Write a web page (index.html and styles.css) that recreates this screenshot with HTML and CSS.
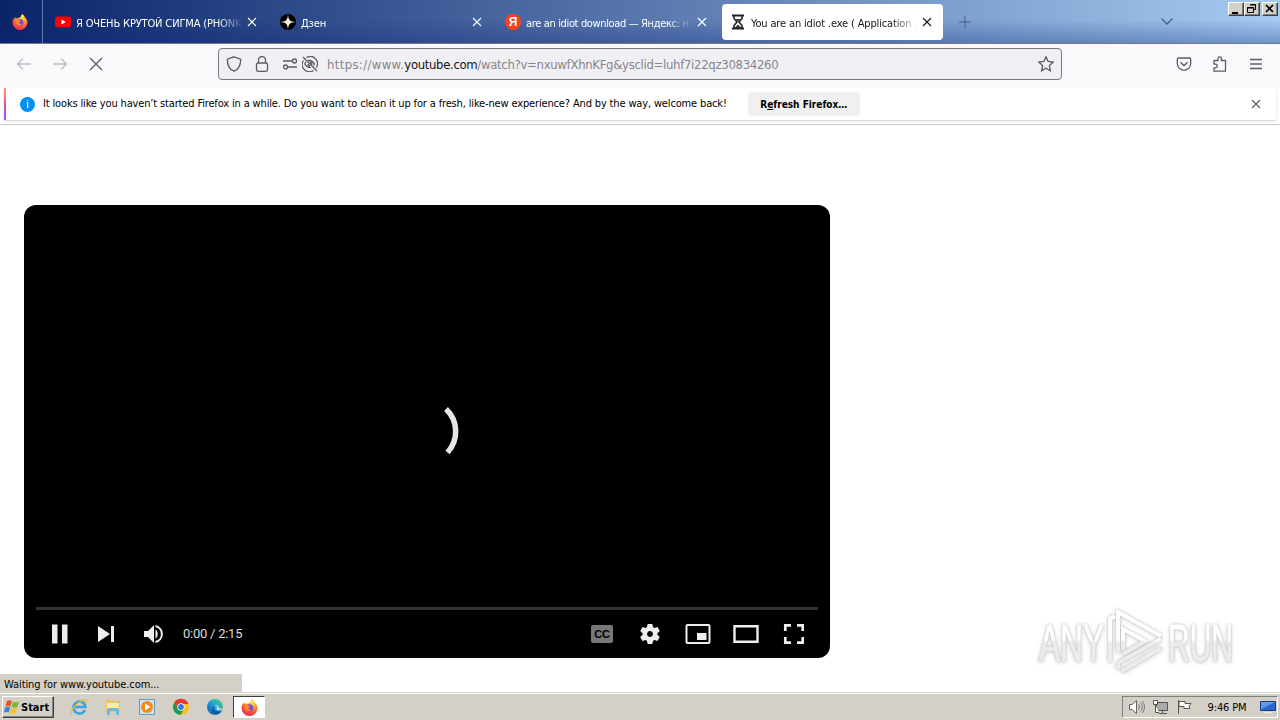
FILE: index.html
```html
<!DOCTYPE html>
<html lang="en">
  <head>
    <meta charset="UTF-8" />
    <title>You are an idiot .exe ( Application -</title>
    <link rel="stylesheet" href="styles.css">
  </head>
  <body>
    <svg class="defs" width="0" height="0">
      <defs>
        <radialGradient id="flame" cx=".65" cy=".15" r=".95">
          <stop offset="0" stop-color="#fff04a" />
          <stop offset=".4" stop-color="#ff9a26" />
          <stop offset=".75" stop-color="#ff4338" />
          <stop offset="1" stop-color="#e81d71" />
        </radialGradient>
        <linearGradient id="sea" x1="0" y1="1" x2="1" y2="0">
          <stop offset="0" stop-color="#0c59a4" />
          <stop offset=".5" stop-color="#1b9de2" />
          <stop offset="1" stop-color="#5bd65a" />
        </linearGradient>
        <linearGradient id="fade" gradientUnits="userSpaceOnUse" x1="0" y1="0" x2="0" y2="66">
          <stop offset=".48" stop-color="#fff" />
          <stop offset=".52" stop-color="#ececec" />
        </linearGradient>
        <symbol id="firefox" viewBox="0 0 16 16">
          <path fill="url(#flame)" d="M10 0c2 1 2.500 2.500 3 3.500 1.500 1 2.500 3 2.500 5a7.500 7.500 0 0 1-15 0c0-2 .7-3.500 1.700-5l.3 1.500c.5-.8.8-1.300 1.500-2l.2 1.600C6 3.800 7.500 4 8.500 3 9 2.500 9.200 1.200 10 0z" />
          <circle cx="8" cy="8.500" r="3.500" fill="#7d4ad6" />
          <path fill="#ff8a25" d="M3.500 5.500c1-.5 2.500-.2 3.500.8l2 .3c-.2.900-1.500 1.200-2 1.500-.3 1.500 1.500 2.400 3 1.700-1 2-3.800 2.200-5.200.5C3.700 9 3.300 7 3.500 5.500z" />
        </symbol>
        <symbol id="cross" viewBox="0 0 10 10">
          <path d="M1 1l8 8M9 1L1 9" fill="none" stroke="currentColor" stroke-width="1.100" />
        </symbol>
      </defs>
    </svg>

    <header class="tabbar">
      <div class="home-tab"><svg width="16" height="16"><use href="#firefox" /></svg></div>
      <div class="tab">
        <svg class="favicon" width="16" height="16" viewBox="0 0 16 16">
          <rect x="0" y="2.500" width="16" height="11" rx="3" fill="#f00" />
          <path d="M6.500 5.500v5L10.800 8z" fill="#fff" />
        </svg>
        <span class="tab-label">Я ОЧЕНЬ КРУТОЙ СИГМА (PHONK</span>
        <svg class="close" width="10" height="10"><use href="#cross" /></svg>
      </div>
      <div class="tab">
        <svg class="favicon" width="16" height="16" viewBox="0 0 16 16">
          <circle cx="8" cy="8" r="8" fill="#000" />
          <path d="M8 0c.2 6 2 7.800 8 8-6 .2-7.800 2-8 8-.2-6-2-7.800-8-8 6-.2 7.800-2 8-8z" fill="#fff4dc" />
        </svg>
        <span class="tab-label">Дзен</span>
        <svg class="close" width="10" height="10"><use href="#cross" /></svg>
      </div>
      <div class="tab">
        <span class="favicon yandex">Я</span>
        <span class="tab-label tight">are an idiot download — Яндекс: н</span>
        <svg class="close" width="10" height="10"><use href="#cross" /></svg>
      </div>
      <div class="tab active">
        <svg class="favicon" width="16" height="16" viewBox="0 0 16 16">
          <path d="M2 1.500h12M2 14.500h12" stroke="#222" stroke-width="2" />
          <path d="M4 2v2.500L7 8l-3 3.500V14h8v-2.500L9 8l3-3.500V2" fill="none" stroke="#222" stroke-width="1.600" />
          <path d="M5.500 5h5L8 7.500zM5 13.500l3-3 3 3z" fill="#333" />
        </svg>
        <span class="tab-label">You are an idiot .exe ( Application -</span>
        <svg class="close" width="10" height="10"><use href="#cross" /></svg>
      </div>
      <svg class="new-tab" width="12" height="12" viewBox="0 0 12 12"><path d="M6 0v12M0 6h12" stroke="#48607f" /></svg>
      <svg class="list-tabs" width="12" height="7" viewBox="0 0 12 7"><path d="M.5 .5L6 6 11.500 .5" fill="none" stroke="#3f618f" stroke-width="1.300" /></svg>
      <div class="window-buttons">
        <div class="wbtn"><svg width="14" height="12"><path d="M3 9h6v2H3z" /></svg></div>
        <div class="wbtn"><svg width="14" height="12"><path d="M5.500 1.500h5v5H9M5 2h6M2.500 4.500h6v5h-6zM2 5h7" fill="none" stroke="#000" /></svg></div>
        <div class="wbtn last"><svg width="14" height="12"><path d="M3 2l7 7M10 2L3 9" stroke="#000" stroke-width="1.700" /></svg></div>
      </div>
    </header>

    <nav class="toolbar">
      <svg class="nav-icon dim" width="16" height="16" viewBox="0 0 16 16"><path d="M15 8H1.500M7 2.500L1.500 8 7 13.500" /></svg>
      <svg class="nav-icon dim" width="16" height="16" viewBox="0 0 16 16"><path d="M1 8h13.500M9 2.500L14.500 8 9 13.500" /></svg>
      <svg class="nav-icon" width="16" height="16" viewBox="0 0 16 16"><path d="M2 2l12 12M14 2L2 14" /></svg>
      <div class="urlbar">
        <svg class="nav-icon" width="16" height="16" viewBox="0 0 16 16"><path d="M8 .8l6.600 2.400c.2 5.500-1.600 10-6.600 12C3 13.200 1.200 8.700 1.400 3.200z" /></svg>
        <svg class="nav-icon lock" width="16" height="16" viewBox="0 0 16 16"><rect x="2.500" y="7" width="11" height="8.300" rx="1.500" /><path d="M4.500 7V4a3.500 3.500 0 0 1 7 0v3" /></svg>
        <svg class="nav-icon perms" width="16" height="16" viewBox="0 0 16 16"><path d="M1 5h9M6 11h9" /><circle cx="12.500" cy="5" r="2" /><circle cx="3.500" cy="11" r="2" /></svg>
        <svg class="nav-icon" width="16" height="16" viewBox="0 0 16 16"><path d="M1 1l14 14M4.500 1.500a7.200 7.200 0 0 1 9.800 10M1.500 4.500a7.200 7.200 0 0 0 10 10M6 4.700c3-.8 5 .8 6.500 3.300l-1 1.500M4 6L2.800 8c1.500 2.600 3.500 3.800 6 3.300M8 6.500a2 2 0 0 1 2 2M6 8a2 2 0 0 0 2 2" /></svg>
        <span class="url"><span class="scheme">https://www.</span><b>youtube.com</b>/watch?v=nxuwfXhnKFg&amp;ysclid=luhf7i22qz30834260</span>
        <svg class="nav-icon star" width="16" height="16" viewBox="0 0 16 16"><path d="M8 .8l2.100 4.700 5.100.6-3.800 3.500 1 5.200L8 12.200l-4.400 2.600 1-5.200L.8 6.100l5.100-.6z" /></svg>
      </div>
      <div class="tools">
        <svg class="nav-icon" width="16" height="16" viewBox="0 0 16 16"><path d="M2.500 2h11c.7 0 1.200.5 1.200 1.200V7.500a6.700 6.700 0 0 1-13.400 0V3.200C1.300 2.500 1.800 2 2.500 2zM4.500 6.200L8 9.500l3.500-3.300" /></svg>
        <svg class="nav-icon" width="16" height="16" viewBox="0 0 16 16"><path d="M2 6.800V4.500h4V2.500a1.700 1.700 0 0 1 3.400 0v2h4.100v10.700H2v-3.400h1.500a1.800 1.800 0 0 0 0-3.600H2z" /></svg>
        <svg class="nav-icon" width="16" height="16" viewBox="0 0 16 16"><path d="M2 3.500h12M2 8h12M2 12.500h12" /></svg>
      </div>
    </nav>

    <section class="infobar">
      <span class="info-icon">i</span>
      <span class="message">It looks like you haven’t started Firefox in a while. Do you want to clean it up for a fresh, like-new experience? And by the way, welcome back!</span>
      <button class="refresh">R<u>e</u>fresh Firefox…</button>
      <svg class="close" width="10" height="10"><use href="#cross" /></svg>
    </section>

    <main class="page">
      <div class="player">
        <div class="stage">
          <svg width="20" height="50" viewBox="0 0 20 50"><path d="M4 3A31 31 0 0 1 5.500 46.500" fill="none" stroke="#e6e6e6" stroke-width="5.500" /></svg>
        </div>
        <div class="progress"></div>
        <div class="controls">
          <svg width="48" height="48" viewBox="0 0 48 48"><path d="M16 14.500h5.500v19H16zM26 14.500h5.500v19H26z" /></svg>
          <svg width="46" height="48" viewBox="0 0 46 48"><path d="M14 16v16l12-8zM27 16h3v16h-3z" /></svg>
          <svg width="46" height="48" viewBox="0 0 46 48"><path d="M14 21v6h4l6 6V15l-6 6zM25.500 19.500v9c3-1.800 3-7.200 0-9z" /><path d="M25.500 16a8.200 8.200 0 0 1 0 16" fill="none" stroke="#eee" stroke-width="2" /></svg>
          <span class="time">0:00 / 2:15</span>
          <div class="right-controls">
            <div class="cc"><span>CC</span></div>
            <svg width="48" height="48" viewBox="0 0 48 48"><g transform="translate(24 24)"><circle r="5.200" fill="none" stroke="#eee" stroke-width="4.500" /><path d="M-2.300-10h4.600l1 4h-6.600zM-2.300 10h4.600l1-4h-6.600z" /><path d="M-2.300-10h4.600l1 4h-6.600zM-2.300 10h4.600l1-4h-6.600z" transform="rotate(60)" /><path d="M-2.300-10h4.600l1 4h-6.600zM-2.300 10h4.600l1-4h-6.600z" transform="rotate(120)" /></g></svg>
            <svg width="48" height="48" viewBox="0 0 48 48"><rect x="12.500" y="15" width="23" height="18" rx="1" fill="none" stroke="#eee" stroke-width="2" /><path d="M23 23h9.500v7H23z" /></svg>
            <svg width="48" height="48" viewBox="0 0 48 48"><path d="M12.500 16.200h23v15.600h-23z" fill="none" stroke="#eee" stroke-width="2.400" /></svg>
            <svg width="48" height="48" viewBox="0 0 48 48"><path d="M15.300 21v-5.700H21M27 15.300h5.700V21M32.700 27v5.700H27M21 32.700h-5.700V27" fill="none" stroke="#eee" stroke-width="2.700" /></svg>
          </div>
        </div>
      </div>
      <svg class="watermark" width="200" height="66" viewBox="0 0 200 66">
        <text x="2" y="53" textLength="65" lengthAdjust="spacingAndGlyphs">ANY</text>
        <path class="mark" d="M73 54V11l5-3M81 44V4l43 24M86 42V21l22 12-22 13M81 55l43-24M85 63l39-23M81 55v6" />
        <text x="131" y="53" textLength="65" lengthAdjust="spacingAndGlyphs">RUN</text>
      </svg>
      <div class="status">Waiting for www.youtube.com...</div>
    </main>

    <footer class="taskbar">
      <button class="start">
        <svg width="16" height="16" viewBox="0 0 16 16"><path d="M3 2c2-1.200 3.500-.8 5 0L6.500 7.500c-1.500-.8-3-.8-5 0z" fill="#e8562a" /><path d="M9 2.500c2 1 4 1 6 0L13.500 8c-2 1-4 1-6 0z" fill="#7ab83b" /><path d="M1.200 8.500c2-1 3.500-.8 5 0l-1.400 5c-1.500-.8-3-.8-5 0z" fill="#3a86d4" /><path d="M7.300 9c2 1 4 1 6 0l-1.500 5c-2 1-4 1-6 0z" fill="#f9c22b" /></svg>Start
      </button>
      <div class="launch">
        <svg width="18" height="18" viewBox="0 0 18 18"><path d="M15 12a6 6 0 1 1 .5-3H5" fill="none" stroke="#35a5e5" stroke-width="2.600" /><path d="M2 16C-1 13 10 1 16 2c1 .4 1 1.500 0 3" fill="none" stroke="#efbd32" stroke-width="1.300" /></svg>
        <svg width="18" height="18" viewBox="0 0 18 18"><path d="M2 2h5l1 1h8v11H2z" fill="#e8c65c" /><path d="M3 5h12v5H3z" fill="#fbeca5" /><path d="M3 17v-5l2-2h8l2 2v5h-3v-4H6v4z" fill="#6db9dc" /></svg>
        <svg width="18" height="18" viewBox="0 0 18 18"><path d="M1.500 1.500h15v15h-15z" fill="#cfe4f4" stroke="#6299c7" /><circle cx="9" cy="9" r="6" fill="#f58b14" /><path d="M7 5.500v7L12.500 9z" fill="#fff" /></svg>
        <svg width="18" height="18" viewBox="0 0 18 18"><circle cx="9" cy="9" r="8" fill="#fbc116" /><path d="M2 5a8 8 0 0 1 14.500 1H9L6 11z" fill="#e33b2e" /><path d="M2 5a8 8 0 0 0 6.500 12l3.500-6-6-1z" fill="#219950" /><circle cx="9" cy="9" r="3.700" fill="#fff" /><circle cx="9" cy="9" r="2.900" fill="#3477e5" /></svg>
        <svg width="18" height="18" viewBox="0 0 18 18"><circle cx="9" cy="9" r="8" fill="url(#sea)" /><path d="M8 8c-2 4 2 7 7.500 4.500C13 18 7 17 6 13c-.6-2 .5-4 2-5z" fill="#1155a0" /><path d="M9 8c3 0 2 2 1 3 2 2 5 1.500 7 .5V10c-.5 1-4 1-4-.5C13 7 8 6 9 8z" fill="#d4d0c8" /></svg>
        <div class="running"><svg width="17" height="17"><use href="#firefox" /></svg></div>
      </div>
      <div class="tray">
        <svg width="18" height="16" viewBox="0 0 18 16"><path d="M1.500 5.500H4L8.500 1.500v13L4 10.500H1.500z" fill="#fff" stroke="#666" /><path d="M10.500 5.500q2 2.500 0 5M12.500 3.500q3.500 4.500 0 9M14.500 2q4 6 0 12" fill="none" stroke="#777" /></svg>
        <svg width="18" height="16" viewBox="0 0 18 16"><path d="M4.500 3.500h11v8h-11zM7 14.500h8M10.500 12v2" fill="#aaa" stroke="#555" /><path d="M1.500 1.500h4v4h-4zM3.500 6v7.500H7" fill="#fff" stroke="#555" /></svg>
        <svg width="18" height="16" viewBox="0 0 18 16"><path d="M2.500 1v14" stroke="#555" /><path d="M3 2.500h6v2h6l-2 3 1 2H8v-2H3z" fill="#fff" stroke="#555" /></svg>
        <span class="clock">9:46 PM</span>
        <svg width="16" height="14" viewBox="0 0 16 14"><path d="M.5 1.500h15v9H.5z" fill="#2b67ce" stroke="#183c83" /><path d="M1 2h14L3 8 1 10z" fill="#659ce9" /><path d="M4 12.500h8" stroke="#eee" /></svg>
      </div>
    </footer>
  </body>
</html>
```
FILE: styles.css
```css
* {
  box-sizing: border-box;
}

body {
  background: #fff;
  color: #000;
  display: flex;
  flex-direction: column;
  font: 11px "DejaVu Sans Condensed", "DejaVu Sans", sans-serif;
  height: 720px;
  letter-spacing: -0.15px;
  margin: 0;
  overflow: hidden;
  width: 1280px;
}

svg {
  display: block;
  flex: none;
}

.defs {
  position: absolute;
}

span,
.status {
  white-space: nowrap;
}

.tabbar {
  background: linear-gradient(to bottom, transparent 45%, rgba(10, 40, 120, 0.32)), linear-gradient(to right, #0a246a, #a6caf0);
  border-bottom: 1px solid #747786;
  display: flex;
  height: 44px;
}

.home-tab {
  border-right: 1px solid #6679a8;
  padding: 14px 11px 0 12px;
  width: 43px;
}

.tab {
  align-items: center;
  border-radius: 4px;
  color: #fff;
  display: flex;
  height: 36px;
  margin: 4px 2px 0;
  padding: 0 11px 0 8px;
  width: 221px;
}

.home-tab + .tab {
  margin-left: 4px;
}

.tab.active {
  background: #fff;
  color: #15141a;
}

.favicon {
  margin-right: 4px;
}

.tab-label {
  flex: 1;
  mask-image: linear-gradient(to left, transparent, #000 25px);
  overflow: hidden;
  padding: 2px 0 0 1px;
}

.tab-label.tight {
  letter-spacing: -0.35px;
}

.tab .close {
  margin-left: 4px;
}

.yandex {
  background: #fc3f1d;
  border-radius: 50%;
  flex: none;
  font: bold 12px/16px "Liberation Sans", sans-serif;
  height: 16px;
  text-align: center;
  width: 16px;
}

.new-tab {
  margin: 16px 0 0 14px;
}

.list-tabs {
  margin: 18px 55px 0 auto;
}

.window-buttons {
  display: flex;
  padding: 2px 2px 0 0;
}

.wbtn {
  background: #d4d0c8;
  border: 1px solid;
  border-color: #fff #404040 #404040 #fff;
  box-shadow: inset -1px -1px #808080;
  height: 14px;
  width: 16px;
}

.wbtn.last {
  margin-left: 2px;
}

.toolbar {
  align-items: center;
  background: #f9f9fb;
  display: flex;
  height: 44px;
  padding: 0 16px 4px;
  gap: 20px;
}

.nav-icon {
  fill: none;
  stroke: #5b5b66;
  stroke-width: 1.3;
}

.nav-icon.dim {
  stroke: #bdbdc2;
}

.urlbar {
  align-items: center;
  background: #f0f0f4;
  border: 1px solid #77777f;
  border-radius: 4px;
  display: flex;
  height: 32px;
  margin-left: 94px;
  padding: 0 7px;
  width: 844px;
}

.lock {
  margin-left: 12px;
}

.perms {
  margin: 0 4px 0 12px;
}

.url {
  color: #85858c;
  flex: 1;
  font-size: 13px;
  letter-spacing: -0.31px;
  margin-left: 9px;
}

.scheme {
  letter-spacing: 0.35px;
}

.url b {
  color: #15141a;
  font-weight: normal;
  letter-spacing: -0.35px;
}

.tools {
  display: flex;
  gap: 20px;
  margin-left: auto;
}

.infobar {
  align-items: center;
  background: #fff;
  border-left: 2px solid;
  border-image: linear-gradient(#ff9c70, #e354a0, #9059ff) 1;
  box-shadow: 0 1px 2px #ccc;
  display: flex;
  flex: none;
  height: 32px;
  margin: 0 4px;
  padding: 0 15px 0 14px;
}

.info-icon {
  background: #0090ed;
  border-radius: 50%;
  color: #fff;
  font: 11px/15px "Liberation Sans", sans-serif;
  height: 15px;
  margin-right: 8px;
  text-align: center;
  width: 15px;
}

.message {
  padding-bottom: 1px;
}

.refresh {
  background: #f0f0f1;
  border: 0;
  border-radius: 4px;
  font: bold 10px "DejaVu Sans Condensed", sans-serif;
  height: 24px;
  margin-left: 21px;
  padding: 0;
  width: 112px;
}

.infobar .close {
  color: #5b5b66;
  margin-left: auto;
}

.page {
  border-top: 1px solid #ccc;
  flex: 1;
  margin-top: 4px;
  padding: 80px 24px 0;
  position: relative;
}

.player {
  background: #000;
  border-radius: 12px;
  display: flex;
  flex-direction: column;
  height: 453px;
  padding: 0 12px;
  width: 806px;
}

.stage {
  flex: 1;
  padding: 201px 0 0 406px;
}

.progress {
  background: #333;
  flex: none;
  height: 3px;
}

.controls {
  align-items: center;
  display: flex;
  height: 48px;
}

.controls svg {
  fill: #eee;
}

.time {
  color: #ddd;
  font: 13px Roboto, sans-serif;
  letter-spacing: -0.25px;
  margin-left: 7px;
  padding-bottom: 1px;
}

.right-controls {
  align-items: center;
  display: flex;
  margin-left: auto;
}

.cc {
  background: #777;
  border-radius: 2px;
  color: #000;
  font: bold 11px/18px "Liberation Sans", sans-serif;
  height: 18px;
  margin: 0 13px;
  text-align: center;
  width: 22px;
}

.watermark {
  fill: url(#fade);
  filter: drop-shadow(0 0 1px #bbb) drop-shadow(0 1px 2px #ddd);
  font: 52px "Liberation Sans", sans-serif;
  left: 1037px;
  letter-spacing: 0;
  overflow: visible;
  position: absolute;
  stroke: url(#fade);
  top: 483px;
}

.mark {
  fill: none;
  stroke-width: 4;
}

.status {
  background: #d4d0c8;
  bottom: 0;
  height: 18px;
  left: 0;
  letter-spacing: -0.08px;
  line-height: 21px;
  padding-left: 4px;
  position: absolute;
  width: 242px;
}

.taskbar {
  align-items: flex-start;
  background: #d4d0c8;
  border-top: 1px solid #d4d0c8;
  box-shadow: inset 0 1px #fff;
  display: flex;
  flex: none;
  height: 28px;
  padding: 3px 2px 0;
}

.start {
  align-items: center;
  background: #d4d0c8;
  border: 1px solid;
  border-color: #fff #404040 #404040 #fff;
  box-shadow: inset -1px -1px #808080;
  display: flex;
  font: bold 11px "DejaVu Sans Condensed", sans-serif;
  gap: 1px;
  height: 22px;
  padding: 0 0 0 1px;
  width: 52px;
}

.launch {
  align-items: center;
  display: flex;
  gap: 16px;
  margin-left: 16px;
}

.running {
  align-items: center;
  background: #fff;
  border: 1px solid;
  border-color: #404040 #fff #fff #404040;
  display: flex;
  height: 22px;
  justify-content: center;
  margin-left: -7px;
  width: 32px;
}

.tray {
  align-items: center;
  border: 1px solid;
  border-color: #808080 #fff #fff #808080;
  display: flex;
  gap: 6px;
  height: 22px;
  margin-left: auto;
  padding: 0 1px 0 5px;
  width: 156px;
}

.clock {
  margin: 0 auto;
}
```
